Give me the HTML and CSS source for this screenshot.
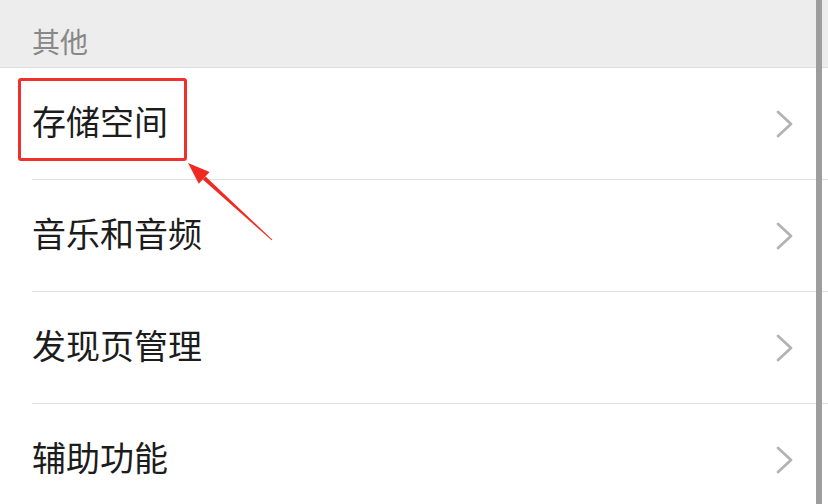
FILE: index.html
```html
<!DOCTYPE html>
<html lang="zh-CN">
<head>
<meta charset="utf-8">
<link rel="stylesheet" href="styles.css">
</head>
<body>
<div class="page">
  <div class="section-header">其他</div>
  <ul class="list">
    <li class="row"><span class="label highlighted">存储空间</span><span class="chev"><svg width="18" height="28" viewBox="0 0 18 28"><path d="M2 2 L15 14 L2 26" fill="none" stroke="#b3b3b3" stroke-width="2.8" stroke-linecap="round" stroke-linejoin="round"/></svg></span></li>
    <li class="row"><span class="label">音乐和音频</span><span class="chev"><svg width="18" height="28" viewBox="0 0 18 28"><path d="M2 2 L15 14 L2 26" fill="none" stroke="#b3b3b3" stroke-width="2.8" stroke-linecap="round" stroke-linejoin="round"/></svg></span></li>
    <li class="row"><span class="label">发现页管理</span><span class="chev"><svg width="18" height="28" viewBox="0 0 18 28"><path d="M2 2 L15 14 L2 26" fill="none" stroke="#b3b3b3" stroke-width="2.8" stroke-linecap="round" stroke-linejoin="round"/></svg></span></li>
    <li class="row"><span class="label">辅助功能</span><span class="chev"><svg width="18" height="28" viewBox="0 0 18 28"><path d="M2 2 L15 14 L2 26" fill="none" stroke="#b3b3b3" stroke-width="2.8" stroke-linecap="round" stroke-linejoin="round"/></svg></span></li>
  </ul>
  <svg class="arrow" width="828" height="504" viewBox="0 0 828 504">
    <polygon points="188,163 209.6,172.0 198.8,183.8" fill="#f02a22"/>
    <polygon points="205.6,176.4 202.8,179.4 271.6,240.3 272.4,239.7" fill="#f02a22"/>
  </svg>
  <div class="scrollbar"></div>
</div>
</body>
</html>
```

FILE: styles.css
```css
html, body {
  margin: 0;
  padding: 0;
  background: #ffffff;
}
body {
  font-family: "Noto Sans CJK SC", "Noto Sans", sans-serif;
  width: 828px;
  height: 504px;
  overflow: hidden;
}
.page {
  position: relative;
  width: 828px;
  height: 504px;
  overflow: hidden;
}
.section-header {
  box-sizing: border-box;
  height: 68px;
  background: #ededed;
  border-bottom: 1px solid #dedede;
  padding: 26px 0 0 32px;
  font-size: 28px;
  line-height: 30px;
  color: #888888;
}
.list {
  list-style: none;
  margin: 0;
  padding: 0 0 0 32px;
}
.row {
  box-sizing: border-box;
  height: 112px;
  display: flex;
  align-items: center;
  justify-content: space-between;
  padding-right: 34px;
  border-bottom: 1px solid #e2e2e2;
}
.label {
  font-size: 34px;
  color: #1c1c1c;
  line-height: 40px;
  margin-bottom: 6px;
  position: relative;
}
.highlighted::after {
  content: "";
  position: absolute;
  left: -14px;
  top: -23px;
  width: 163px;
  height: 77px;
  border: 3px solid #f0302a;
  border-radius: 3px;
}
.chev {
  display: flex;
  width: 18px;
  height: 28px;
}
.arrow {
  position: absolute;
  left: 0;
  top: 0;
  pointer-events: none;
}
.scrollbar {
  position: absolute;
  top: 0;
  left: 816px;
  width: 6px;
  height: 504px;
  background: #9d9d9d;
}
```
